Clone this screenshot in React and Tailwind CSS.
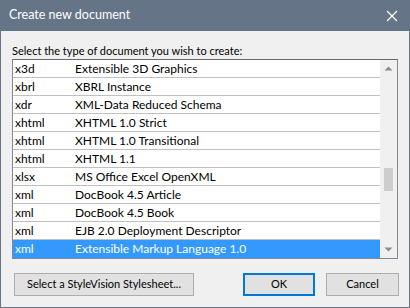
import React from "react";

const rows = [
  ["x3d", "Extensible 3D Graphics"],
  ["xbrl", "XBRL Instance"],
  ["xdr", "XML-Data Reduced Schema"],
  ["xhtml", "XHTML 1.0 Strict"],
  ["xhtml", "XHTML 1.0 Transitional"],
  ["xhtml", "XHTML 1.1"],
  ["xlsx", "MS Office Excel OpenXML"],
  ["xml", "DocBook 4.5 Article"],
  ["xml", "DocBook 4.5 Book"],
  ["xml", "EJB 2.0 Deployment Descriptor"],
  ["xml", "Extensible Markup Language 1.0"],
];

export default function App() {
  return (
    <div
      className="w-[410px] h-[308px] flex flex-col bg-[#f0f0f0] border border-t-0 border-[#667488] text-[12px] text-black"
      style={{ fontFamily: 'Lato, "Liberation Sans", sans-serif' }}
    >
      {/* Title bar */}
      <div className="h-[31px] shrink-0 bg-[#667488] flex items-center justify-between pl-[9px] pr-[12px] -mx-px">
        <span className="text-white text-[12.5px]">Create new document</span>
        <svg width="12" height="12" viewBox="0 0 12 12" className="text-white">
          <path d="M1 1L11 11M11 1L1 11" stroke="currentColor" strokeWidth="1.2" />
        </svg>
      </div>

      <div className="flex-1 flex flex-col px-[11px]">
        <div className="pt-[11px] h-[28px] leading-[17px] text-[11px]">Select the type of document you wish to create:</div>

        {/* List */}
        <div className="h-[200px] flex border border-[#828790] border-t-[#696969] bg-white">
          <div className="flex-1 flex flex-col">
            {rows.map(([ext, name], i) => {
              const sel = i === rows.length - 1;
              return (
                <div
                  key={i}
                  className={`h-[18px] flex items-center border-b ${sel ? "bg-[#3399ff] text-white border-[#3399ff]" : "border-[#c0c0c0]"}`}
                >
                  <span className="w-[62px] pl-[2px]">{ext}</span>
                  <span>{name}</span>
                </div>
              );
            })}
          </div>
          <div className="w-[17px] bg-[#f0f0f0] flex flex-col items-center">
            <svg width="17" height="17" viewBox="0 0 17 17">
              <path d="M4.5 10.5L8.5 6.5L12.5 10.5Z" fill="#868b96" />
            </svg>
            <div className="h-[91px]" />
            <div className="w-[9px] h-[23px] bg-[#cdcdcd]" />
            <div className="flex-1" />
            <svg width="17" height="17" viewBox="0 0 17 17">
              <path d="M4.5 6.5L8.5 10.5L12.5 6.5Z" fill="#868b96" />
            </svg>
          </div>
        </div>

        {/* Buttons */}
        <div className="flex items-center mt-[14px] pl-[2px] text-[11px]">
          <button className="w-[180px] h-[23px] bg-[#e1e1e1] border border-[#adadad]">
            Select a StyleVision Stylesheet...
          </button>
          <div className="flex-1" />
          <button className="w-[72px] h-[23px] bg-[#e1e1e1] border-2 border-[#0078d7]">OK</button>
          <button className="w-[73px] h-[23px] bg-[#e1e1e1] border border-[#adadad] ml-[11px] mr-[-1px]">Cancel</button>
        </div>
      </div>
    </div>
  );
}
